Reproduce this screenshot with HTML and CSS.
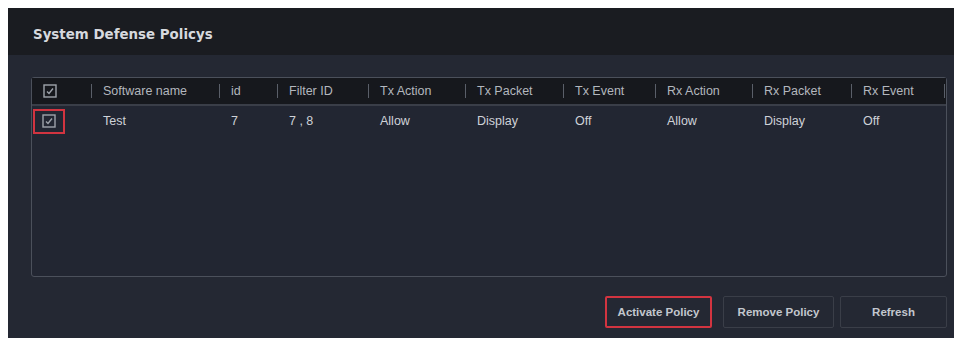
FILE: index.html
```html
<!DOCTYPE html>
<html lang="en">

<head>
    <meta charset="UTF-8">
    <title>System Defense Policys</title>
    <link rel="stylesheet" href="styles.css">
</head>

<body>
    <div class="panel">
        <div class="panel-title">System Defense Policys</div>
        <div class="panel-body">
            <div class="policy-table">
                <div class="row head">
                    <div class="cell check">
                        <svg class="box" width="14" height="14" viewBox="0 0 14 14">
                            <rect x="1" y="1" width="12" height="12" fill="none" stroke="#9ea3ab" stroke-width="1.4"/>
                            <path d="M4 7.5 L6 9.5 L10 4.5" fill="none" stroke="#9ea3ab" stroke-width="1.4"/>
                        </svg>
                    </div>
                    <div class="cell">Software name</div>
                    <div class="cell">id</div>
                    <div class="cell">Filter ID</div>
                    <div class="cell">Tx Action</div>
                    <div class="cell">Tx Packet</div>
                    <div class="cell">Tx Event</div>
                    <div class="cell">Rx Action</div>
                    <div class="cell">Rx Packet</div>
                    <div class="cell">Rx Event</div>
                </div>
                <div class="row data">
                    <div class="cell check">
                        <span class="mark">
                            <svg class="box" width="14" height="14" viewBox="0 0 14 14">
                                <rect x="1" y="1" width="12" height="12" fill="none" stroke="#9ea3ab" stroke-width="1.4"/>
                                <path d="M4 7.5 L6 9.5 L10 4.5" fill="none" stroke="#9ea3ab" stroke-width="1.4"/>
                            </svg>
                        </span>
                    </div>
                    <div class="cell">Test</div>
                    <div class="cell">7</div>
                    <div class="cell">7 , 8</div>
                    <div class="cell">Allow</div>
                    <div class="cell">Display</div>
                    <div class="cell">Off</div>
                    <div class="cell">Allow</div>
                    <div class="cell">Display</div>
                    <div class="cell">Off</div>
                </div>
            </div>
            <div class="actions">
                <button class="btn marked">Activate Policy</button>
                <button class="btn wide">Remove Policy</button>
                <button class="btn">Refresh</button>
            </div>
        </div>
    </div>
</body>

</html>
```

FILE: styles.css
```css
body {
    margin: 8px;
    background-color: #ffffff;
    font-family: "Liberation Sans", Arial, sans-serif;
}

.panel {
    width: 947px;
    height: 330px;
    background-color: #242833;
    box-shadow: 0 0 2px 1px #b8b8b8;
    display: flex;
    flex-direction: column;
}

.panel-title {
    height: 47px;
    background-color: #1a1c21;
    color: #d6d9de;
    font-family: "DejaVu Sans", sans-serif;
    font-weight: bold;
    font-size: 13.4px;
    line-height: 41px;
    padding: 6px 0 0 25px;
    box-sizing: border-box;
}

.panel-body {
    flex: 1;
    padding: 22px 8px 10px 23px;
    display: flex;
    flex-direction: column;
}

.policy-table {
    height: 200px;
    box-sizing: border-box;
    border: 1px solid #4b505b;
    border-radius: 3px;
    background-color: #222632;
}

.row {
    display: grid;
    grid-template-columns: 59px 128px 58px 91px 97px 98px 92px 97px 99px 94px;
    align-items: center;
    font-size: 12.5px;
}

.row.head {
    height: 26px;
    background-color: #16181d;
    border-bottom: 2px solid #3a3e48;
    color: #b3b7be;
}

.row.data {
    height: 30px;
    color: #cfd2d8;
}

.cell {
    padding-left: 12px;
    white-space: nowrap;
    line-height: 16px;
}

.row.head .cell {
    position: relative;
}

.row.head .cell:not(.check)::before {
    content: "";
    position: absolute;
    left: 0;
    top: 1px;
    bottom: 1px;
    width: 1px;
    background-color: #5a5f69;
}

.row.head .cell:last-child::after {
    content: "";
    position: absolute;
    right: 0;
    top: 1px;
    bottom: 1px;
    width: 1px;
    background-color: #5a5f69;
}

.cell.check {
    padding-left: 11px;
    display: flex;
    align-items: center;
}

.box {
    display: block;
}

.mark {
    display: flex;
    align-items: center;
    justify-content: center;
    width: 32px;
    height: 25px;
    margin-left: -10px;
    border: 2px solid #d23440;
    box-sizing: border-box;
}

.actions {
    margin-top: auto;
    display: flex;
    justify-content: flex-end;
    gap: 6px;
}

.btn {
    width: 107px;
    height: 32px;
    background-color: #242833;
    border: 1px solid #3a3e48;
    border-radius: 2px;
    color: #c3c7ce;
    font-family: "Liberation Sans", Arial, sans-serif;
    font-weight: bold;
    font-size: 11.5px;
    cursor: pointer;
}

.btn.wide {
    width: 111px;
}

.btn.marked {
    border: 2px solid #d23440;
    margin-right: 5px;
}
```
